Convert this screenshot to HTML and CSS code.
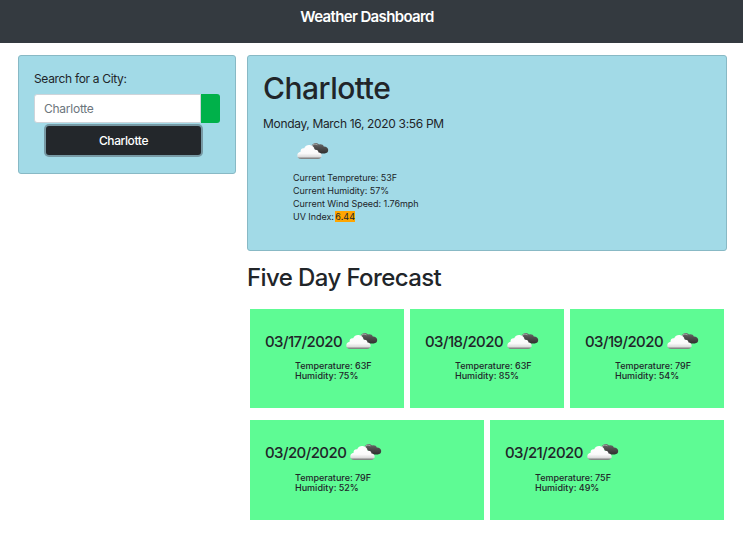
FILE: index.html
```html
<!DOCTYPE html>
<html lang="en">
<head>
<meta charset="utf-8">
<title>Weather Dashboard</title>
<link rel="stylesheet" href="styles.css">
</head>
<body>
<svg class="defs" aria-hidden="true">
  <defs>
    <linearGradient id="light" x1="0" y1="0" x2="0" y2="1">
      <stop offset="0" stop-color="#fff"/><stop offset=".6" stop-color="#fafafa"/><stop offset=".84" stop-color="#dcdcdc"/><stop offset=".94" stop-color="#858585"/><stop offset="1" stop-color="#858585"/>
    </linearGradient>
    <linearGradient id="dark" x1="0" y1="0" x2="0" y2="1">
      <stop offset="0" stop-color="#707070"/><stop offset=".4" stop-color="#505050"/><stop offset="1" stop-color="#303030"/>
    </linearGradient>
    <symbol id="cloud" viewBox="0 0 32 18">
      <path fill="url(#dark)" d="M14.5 4.5C15 2 17 .8 19.2 1C20.5 1.1 21.3 1.7 22 2.6C24 1.8 26.2 2.6 26.8 4.4C29.3 4.3 31 5.7 31.2 7.8C31.4 10 29.8 11.4 27.7 11.4H22Z"/>
      <path fill="none" stroke="#b8b8b8" stroke-width=".8" d="M15 4.1C16 2.2 18.5 1.5 20.5 2.8"/>
      <path fill="url(#light)" d="M4.2 17C1.7 17 .3 15.6.3 13.6C.3 11.5 1.6 10 3.6 9.8C3.2 7.5 4.8 5.9 7.2 6.3C8.3 3.8 10.2 2.8 12.6 3C15.5 3.2 17.3 5 17.6 7.7C20.1 7.3 21.5 8.6 21.5 10.6C23.5 10.8 24.7 12 24.7 13.8C24.7 15.8 23.2 17 21 17Z"/>
    </symbol>
  </defs>
</svg>
<header class="navbar"><h1 class="brand">Weather Dashboard</h1></header>
<main class="layout">
  <aside class="card search">
    <label class="search-label" for="city">Search for a City:</label>
    <div class="input-group">
      <input class="city-input" id="city" type="text" placeholder="Charlotte">
      <button class="go" type="button" aria-label="Search"></button>
    </div>
    <button class="history" type="button">Charlotte</button>
  </aside>
  <div class="content">
    <section class="card current">
      <h2 class="city">Charlotte</h2>
      <p class="date">Monday, March 16, 2020 3:56 PM</p>
      <svg class="cloud"><use href="#cloud"/></svg>
      <ul class="stats">
        <li>Current Tempreture: 53F</li>
        <li>Current Humidity: 57%</li>
        <li>Current Wind Speed: 1.76mph</li>
        <li>UV Index: <span class="uv">6.44</span></li>
      </ul>
    </section>
    <h2 class="forecast-title">Five Day Forecast</h2>
    <section class="forecast">
      <article class="day">
        <h3 class="day-head"><span>03/17/2020</span><svg class="cloud"><use href="#cloud"/></svg></h3>
        <ul class="day-stats"><li>Temperature: 63F</li><li>Humidity: 75%</li></ul>
      </article>
      <article class="day">
        <h3 class="day-head"><span>03/18/2020</span><svg class="cloud"><use href="#cloud"/></svg></h3>
        <ul class="day-stats"><li>Temperature: 63F</li><li>Humidity: 85%</li></ul>
      </article>
      <article class="day">
        <h3 class="day-head"><span>03/19/2020</span><svg class="cloud"><use href="#cloud"/></svg></h3>
        <ul class="day-stats"><li>Temperature: 79F</li><li>Humidity: 54%</li></ul>
      </article>
      <article class="day wide">
        <h3 class="day-head"><span>03/20/2020</span><svg class="cloud"><use href="#cloud"/></svg></h3>
        <ul class="day-stats"><li>Temperature: 79F</li><li>Humidity: 52%</li></ul>
      </article>
      <article class="day wide">
        <h3 class="day-head"><span>03/21/2020</span><svg class="cloud"><use href="#cloud"/></svg></h3>
        <ul class="day-stats"><li>Temperature: 75F</li><li>Humidity: 49%</li></ul>
      </article>
    </section>
  </div>
</main>
</body>
</html>
```

FILE: styles.css
```css
* { box-sizing: border-box; }
body { margin: 0; background: #fff; color: #212529; font: 12px/18px Inter, "Liberation Sans", sans-serif; letter-spacing: -.33px; }
h1, h2, h3, p, ul { margin: 0; padding: 0; }
ul { list-style: none; }
.defs { position: absolute; width: 0; height: 0; }
.navbar { height: 43px; padding: 7px 9px 0 0; background: #343a40; color: #fff; text-align: center; }
.brand { font-size: 15px; line-height: 20px; font-weight: 600; letter-spacing: -.65px; }
.layout { display: grid; grid-template-columns: 218px 480px; column-gap: 11px; align-items: start; padding: 12px 0 0 18px; }
.card { background: #a2dae7; border: 1px solid #88b9c5; border-radius: 3px; }
.search { height: 119px; padding: 14px 15px 0; }
.search-label { display: block; }
.input-group { display: flex; height: 29px; margin-top: 6px; }
.city-input { width: 167px; padding: 0 9px; border: 1px solid #ced4da; border-radius: 3px 0 0 3px; background: #fff; font: inherit; letter-spacing: -.25px; }
.city-input::placeholder { color: #6c757d; opacity: 1; }
.go { width: 19px; padding: 0; border: 0; border-radius: 0 3px 3px 0; background: #00b14a; }
.history { display: block; width: 155px; height: 29px; margin: 3px 0 0 12px; padding: 0; border: 0; border-radius: 3px; background: #23272b; color: #fff; font: inherit; font-weight: 500; letter-spacing: -.4px; box-shadow: 0 0 0 2px #7799a4; }
.current { height: 196px; padding: 14px 15px; }
.city { font-size: 30px; line-height: 36px; font-weight: 500; letter-spacing: -.5px; }
.date { margin-top: 9px; }
.cloud { display: block; width: 32px; height: 18px; flex: none; }
.current .cloud { margin: 9px 0 0 34px; }
.stats { margin: 11px 0 0 30px; font-size: 9px; line-height: 13px; letter-spacing: -.05px; }
.uv { margin-left: -1px; letter-spacing: .1px; background: #ffa500; }
.forecast-title { margin-top: 12px; font-size: 24px; line-height: 30px; font-weight: 500; letter-spacing: -.6px; }
.forecast { display: grid; grid-template-columns: repeat(6, 1fr); gap: 12px 6px; padding: 16px 3px 0; }
.day { grid-column: span 2; height: 99px; padding: 23px 15px 0; background: #5efb94; }
.wide { grid-column: span 3; height: 100px; }
.day-head { display: flex; align-items: center; gap: 4px; height: 20px; font-size: 15px; line-height: 20px; font-weight: 500; letter-spacing: -.57px; }
.day-head .cloud { margin-top: -2px; }
.day-stats { margin: 9px 0 0 30px; font-size: 9px; line-height: 10px; font-weight: 500; letter-spacing: 0; }
.wide .day-stats { margin-top: 10px; }
```
